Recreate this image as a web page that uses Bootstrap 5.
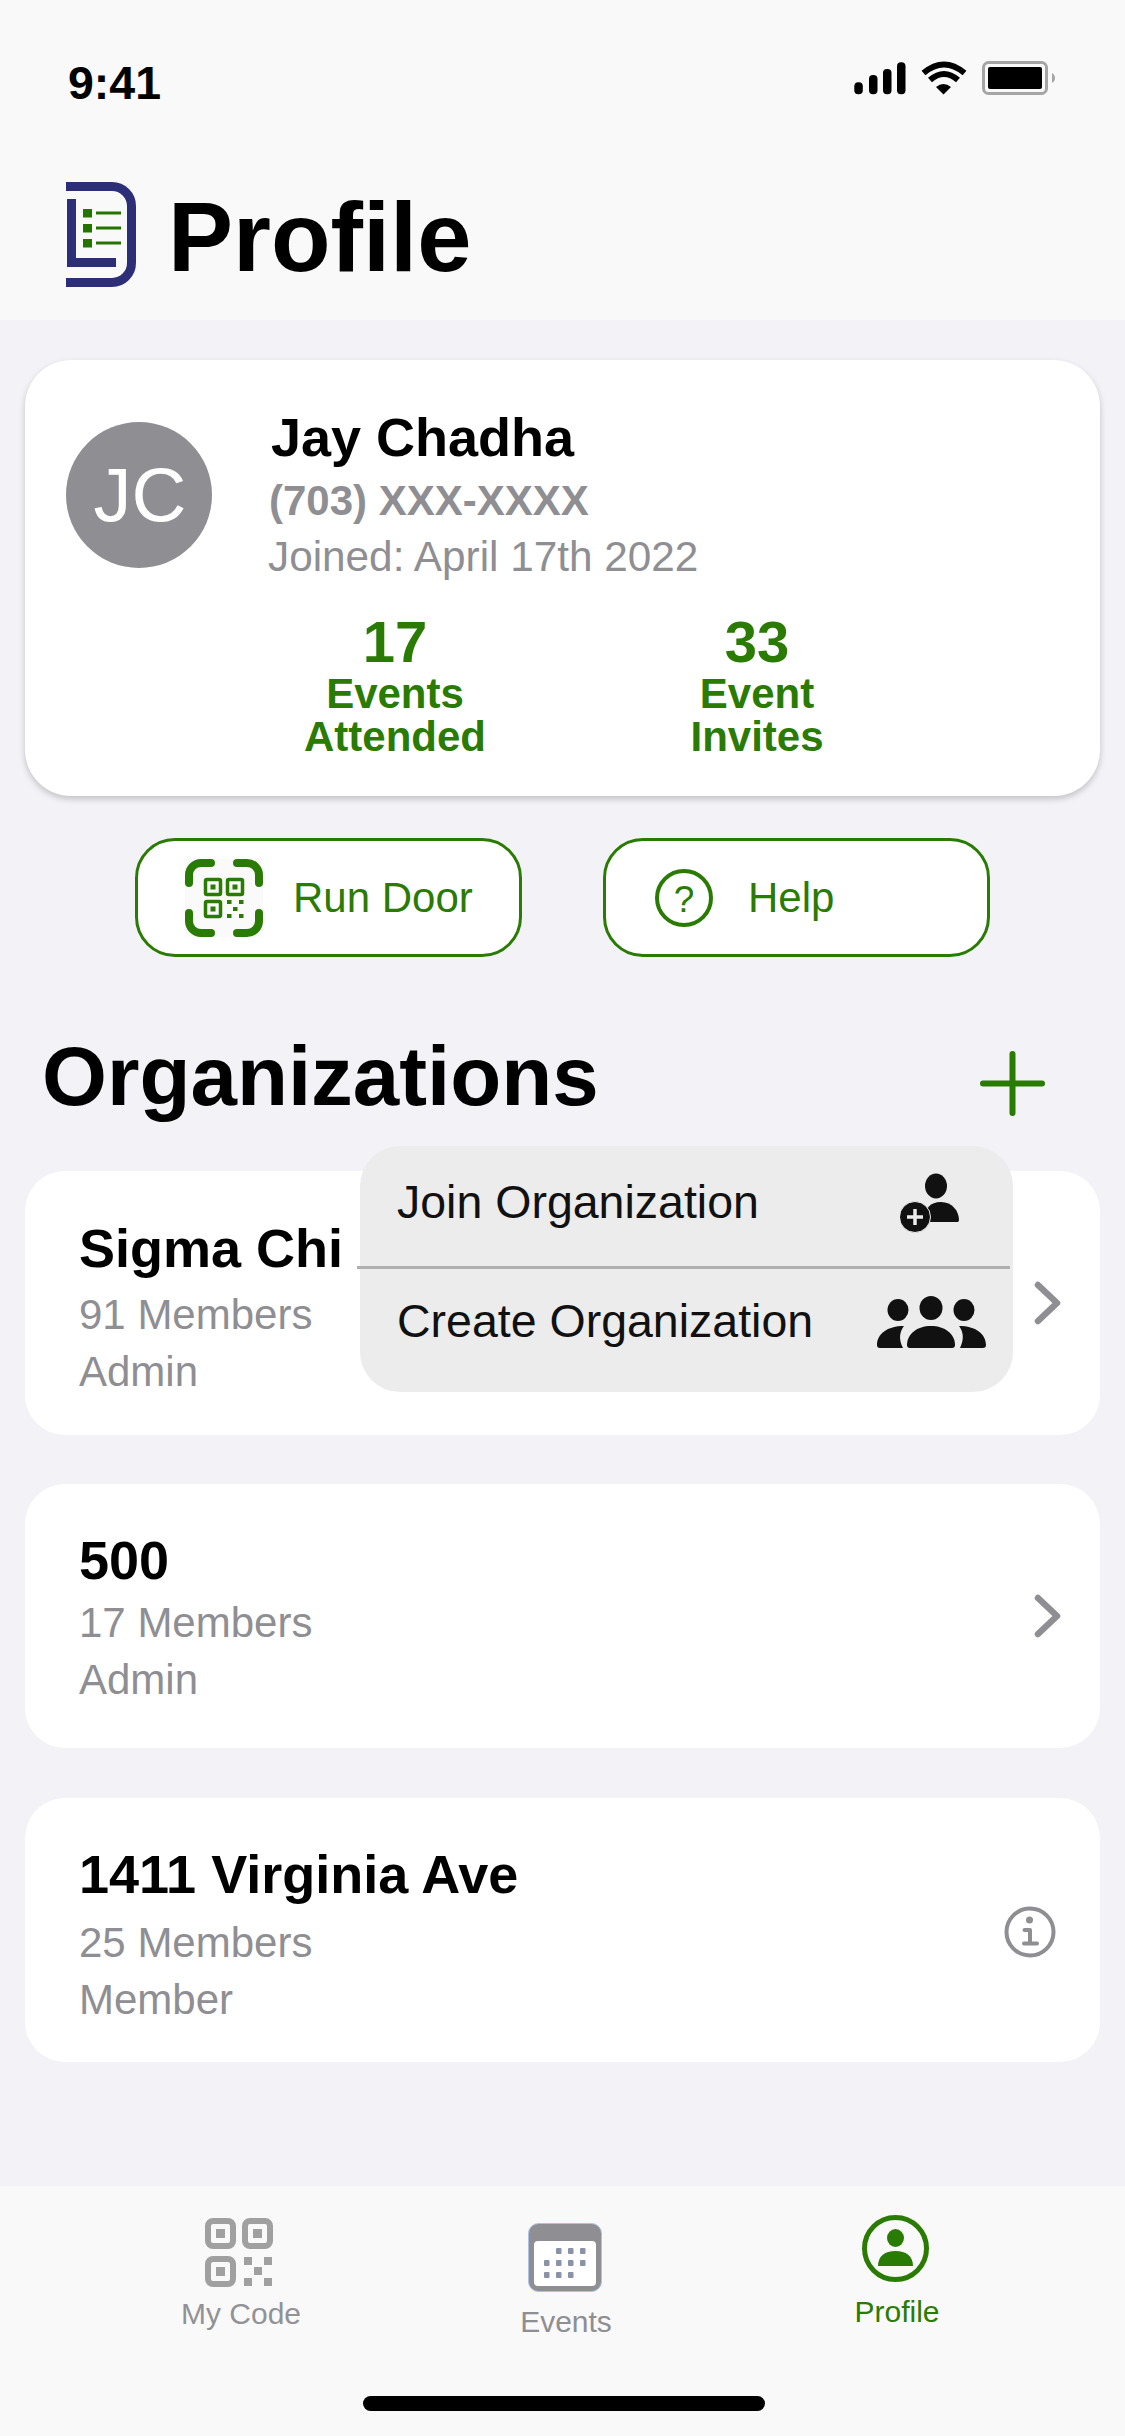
<!doctype html>
<html lang="en">
<head>
<meta charset="utf-8">
<title>Profile</title>
<link href="https://cdn.jsdelivr.net/npm/bootstrap@5.3.0/dist/css/bootstrap.min.css" rel="stylesheet">
<style>
html,body{width:1125px;height:2436px;margin:0;overflow:hidden}
body{font-family:"Liberation Sans",Arial,sans-serif;background:#f2f2f7;color:#000}
svg{display:block;flex:none}
.app-shell{width:1125px;height:2436px}
.top-area{height:320px;background:#f9f9f9;padding:61px 70px 0 66px}
.status-row{height:39px}
.clock{font-size:46.5px;line-height:45px;font-weight:700;margin:0 0 0 2px}
.status-icons{gap:15px}
.title-row{margin-top:82px;gap:32px}
.title-text{font-size:97.5px;line-height:105px;font-weight:700;margin:3px 0 0}
.content-area{padding:40px 25px 0}
.profile-box{height:436px;border-radius:46px;border:0;background:#fff;box-shadow:0 3px 6px rgba(0,0,0,.2);padding:62px 41px 0}
.avatar-disc{width:146px;height:146px;border-radius:50%;background:#8e8e93;color:#fff;font-size:76px;line-height:146px;text-align:center;padding-left:2px}
.person-text{margin-left:56px;margin-top:-15px}
.person-name{font-size:54px;line-height:60px;font-weight:700;margin-left:3px}
.person-phone{font-size:42px;line-height:50px;font-weight:700;color:#8e8e93;margin-top:9px;margin-left:1px}
.person-joined{font-size:42.300px;line-height:50px;color:#8e8e93;margin-top:6px}
.stat-row{margin-top:34px}
.stat-one{width:300px;margin-left:179px}
.stat-two{width:300px;margin-left:62px}
.stat-block{color:#2a7b03;font-weight:700;text-align:center}
.stat-num{font-size:58px;line-height:52px}
.stat-lbl{font-size:42px;line-height:43px;margin-top:4px}
.action-row{margin-top:42px;gap:81px}
.action-btn{width:387px;height:119px;border:3px solid #2a7b03;border-radius:40px;background:#fff;color:#2a7b03;font-size:42px;line-height:48px;padding:0;display:flex;align-items:center;justify-content:flex-start}
.action-btn:hover{background:#fff;color:#2a7b03;border-color:#2a7b03}
.scan-wrap{margin-left:47px;margin-right:30px;background:#fafafa}
.help-wrap{margin-left:48px;margin-right:34px}
.org-head{height:214px;padding:6px 55px 0 17px}
.org-title{font-size:83.500px;line-height:90px;font-weight:700;margin:18px 0 0;flex:1}
.plus-btn{padding:0;border:0;background:none;margin-top:32px}
.org-item{height:264px;border:0;border-radius:40px;background:#fff;padding:0 38px 0 54px;margin-bottom:50px}
.org-item.first-org{margin-bottom:49px}
.org-name{font-size:54px;line-height:60px;font-weight:700}
.org-sub{font-size:42px;line-height:50px;color:#8e8e93}
.gap-a{margin-top:47px}.gap-b{margin-top:12px}.gap-c{margin-top:7px}
.gap-d{margin-top:46px}.gap-e{margin-top:8px}
.gap-f{margin-top:46px}.gap-g{margin-top:14px}
.org-main{flex:1}
.chev-ico{margin-right:1px}
.info-ico{margin-right:6px;margin-top:4px}
.pop-menu{left:335px;top:189px;width:653px;height:246px;background:#ececec;border-radius:40px;z-index:5}
.pop-line{height:120px;padding:0 28px 6px 37px;font-size:46.500px;color:#111}
.pop-line.second{height:123px;padding-right:27px;padding-bottom:18px}
.pop-rule{height:3px;background:#b0b0b0;margin-left:-3px;margin-right:3px}
.pop-text{flex:1}
.join-ico{margin-right:25px}
.nav-bar{position:absolute;left:0;right:0;top:2186px;height:250px;background:#f9f9f9}
.tab-cell{width:300px;font-size:30px;line-height:36px;color:#8e8e93;text-align:center}
.tab-first{margin-left:91px;padding-top:32px;color:#929295}
.tab-first svg{margin:0 0 0 114px}
.tab-second{margin-left:25px;padding-top:37px}
.tab-second svg{margin:0 0 0 112px}
.tab-third{margin-left:31px;padding-top:29px;color:#2a7b03}
.tab-third svg{margin:0 0 0 115px}
.lbl-a{margin-top:9px}.lbl-b{margin-top:12px}.lbl-c{margin-top:12px}
.home-pill{position:absolute;left:363px;top:210px;width:402px;height:15px;border-radius:8px;background:#000}
</style>
</head>
<body>
<div class="app-shell position-relative d-flex flex-column">
  <header class="top-area">
    <div class="status-row d-flex justify-content-between align-items-start">
      <div class="clock">9:41</div>
      <div class="status-icons d-flex align-items-start">
        <svg width="52" height="34" viewBox="0 0 52 34" fill="#000"><rect x="0.300" y="21.300" width="8.500" height="12" rx="4"/><rect x="15" y="14" width="8.500" height="19.300" rx="4"/><rect x="29" y="8" width="8.500" height="25.300" rx="4"/><rect x="43" y="1.300" width="8.500" height="32" rx="4"/></svg>
        <svg width="46" height="34" viewBox="0 0 46 34" fill="none" stroke="#000" stroke-width="6"><path d="M2.500 12Q23 -5 43.500 12"/><path d="M9 19Q23 7 37 19"/><path d="M22.500 33.500L15 26Q22.500 20 30 26Z" fill="#000" stroke="none"/></svg>
        <svg width="73" height="35" viewBox="0 0 73 35"><rect x="1.500" y="1.500" width="63" height="31" rx="5" fill="none" stroke="#a5a5a5" stroke-width="3"/><rect x="6" y="6" width="54" height="22" rx="2" fill="#000"/><path d="M70 12c2 1 3 3 3 5s-1 4-3 5z" fill="#a5a5a5"/></svg>
      </div>
    </div>
    <div class="title-row d-flex align-items-start">
      <svg width="70" height="105" viewBox="0 0 70 105">
        <path d="M0 4.500H46A19.500 19.500 0 0 1 65.500 24V81A19.500 19.500 0 0 1 46 100.500H0" fill="none" stroke="#2c2f78" stroke-width="9"/>
        <path d="M1 17H10V76H50V85H1Z" fill="#2c2f78"/>
        <g fill="#267400"><rect x="17" y="27" width="9" height="8.500"/><rect x="17" y="42" width="9" height="8.500"/><rect x="17" y="57" width="9" height="8.500"/><rect x="30" y="29.500" width="25" height="3"/><rect x="30" y="44.500" width="25" height="3"/><rect x="30" y="59.500" width="25" height="3"/></g>
      </svg>
      <h1 class="title-text">Profile</h1>
    </div>
  </header>

  <main class="content-area flex-grow-1">
    <section class="card profile-box">
      <div class="d-flex align-items-start">
        <div class="avatar-disc">JC</div>
        <div class="person-text">
          <div class="person-name">Jay Chadha</div>
          <div class="person-phone">(703) XXX-XXXX</div>
          <div class="person-joined">Joined: April 17th 2022</div>
        </div>
      </div>
      <div class="stat-row d-flex">
        <div class="stat-block stat-one"><div class="stat-num">17</div><div class="stat-lbl">Events<br>Attended</div></div>
        <div class="stat-block stat-two"><div class="stat-num">33</div><div class="stat-lbl">Event<br>Invites</div></div>
      </div>
    </section>

    <div class="action-row d-flex justify-content-center">
      <button type="button" class="btn action-btn">
        <svg class="scan-wrap" width="78" height="78" viewBox="0 0 78 78" fill="none">
          <g stroke="#2a7b03" stroke-width="8" stroke-linecap="round"><path d="M4 24V16A12 12 0 0 1 16 4H26"/><path d="M52 4H62A12 12 0 0 1 74 16V24"/><path d="M4 54V62A12 12 0 0 0 16 74H26"/><path d="M52 74H62A12 12 0 0 0 74 62V54"/></g>
          <g stroke="#2a7b03" stroke-width="3.500"><rect x="20.500" y="20.500" width="15" height="15" rx="1.500"/><rect x="42.500" y="20.500" width="15" height="15" rx="1.500"/><rect x="20.500" y="42.500" width="15" height="15" rx="1.500"/></g>
          <g fill="#2a7b03"><rect x="25.500" y="25.500" width="5" height="5"/><rect x="47.500" y="25.500" width="5" height="5"/><rect x="25.500" y="47.500" width="5" height="5"/><rect x="42" y="41" width="4.500" height="4"/><rect x="54" y="41" width="4.500" height="4"/><rect x="48" y="48" width="4.500" height="4"/><rect x="42" y="55" width="4.500" height="4"/><rect x="54" y="55" width="4.500" height="4"/></g>
        </svg>
        <span>Run Door</span>
      </button>
      <button type="button" class="btn action-btn">
        <svg class="help-wrap" width="60" height="60" viewBox="0 0 60 60"><circle cx="30" cy="30" r="27" fill="none" stroke="#2a7b03" stroke-width="4"/><text x="30" y="44" text-anchor="middle" font-family="Liberation Sans, sans-serif" font-size="37" fill="#2a7b03">?</text></svg>
        <span>Help</span>
      </button>
    </div>

    <section class="org-block position-relative">
      <div class="org-head d-flex align-items-center">
        <h2 class="org-title">Organizations</h2>
        <button type="button" class="plus-btn" aria-label="Add">
          <svg width="65" height="65" viewBox="0 0 65 65" stroke="#2a7b03" stroke-width="6" stroke-linecap="round"><path d="M32.500 3V62M3 32.500H62"/></svg>
        </button>
      </div>

      <div class="pop-menu position-absolute">
        <div class="pop-line d-flex align-items-center">
          <span class="pop-text">Join Organization</span>
          <svg class="join-ico" width="60" height="60" viewBox="0 0 60 60" fill="#111"><ellipse cx="36" cy="13" rx="11" ry="12.500"/><path d="M25 47C25 35 30 29 41 29C52 29 59 38 59 47C59 48.500 58 49 57 49H28Z"/><circle cx="15" cy="44" r="15.500" stroke="#ececec" stroke-width="1"/><path d="M15 36V52M7 44H23" stroke="#ececec" stroke-width="3.500"/></svg>
        </div>
        <div class="pop-rule"></div>
        <div class="pop-line second d-flex align-items-center">
          <span class="pop-text">Create Organization</span>
          <svg width="109" height="52" viewBox="0 0 109 52" fill="#111"><ellipse cx="54" cy="12" rx="11.500" ry="12"/><ellipse cx="21" cy="14" rx="10.500" ry="11"/><ellipse cx="87" cy="14" rx="10.500" ry="11"/><path d="M30 49C30 38 40 30 54 30C68 30 78 38 78 49C78 51 77 52 75 52H33C31 52 30 51 30 49Z"/><path d="M0 49C0 38 10 30 27 30C25 33 20 40 26 52H3C1 52 0 51 0 49Z"/><path d="M109 49C109 38 99 30 82 30C84 33 89 40 83 52H106C108 52 109 51 109 49Z"/></svg>
        </div>
      </div>

      <article class="card org-item first-org flex-row align-items-start">
        <div class="org-main">
          <div class="org-name gap-a">Sigma Chi</div>
          <div class="org-sub gap-b">91 Members</div>
          <div class="org-sub gap-c">Admin</div>
        </div>
        <svg class="chev-ico align-self-center" width="27" height="44" viewBox="0 0 27 44" fill="none" stroke="#8e8e93" stroke-width="6.500" stroke-linecap="round" stroke-linejoin="round"><path d="M4 4L23 22L4 40"/></svg>
      </article>
      <article class="card org-item flex-row align-items-start">
        <div class="org-main">
          <div class="org-name gap-d">500</div>
          <div class="org-sub gap-e">17 Members</div>
          <div class="org-sub gap-c">Admin</div>
        </div>
        <svg class="chev-ico align-self-center" width="27" height="44" viewBox="0 0 27 44" fill="none" stroke="#8e8e93" stroke-width="6.500" stroke-linecap="round" stroke-linejoin="round"><path d="M4 4L23 22L4 40"/></svg>
      </article>
      <article class="card org-item flex-row align-items-start">
        <div class="org-main">
          <div class="org-name gap-f">1411 Virginia Ave</div>
          <div class="org-sub gap-g">25 Members</div>
          <div class="org-sub gap-c">Member</div>
        </div>
        <svg class="info-ico align-self-center" width="52" height="52" viewBox="0 0 52 52"><circle cx="26" cy="26" r="23.500" fill="none" stroke="#8e8e93" stroke-width="4"/><circle cx="25.500" cy="14" r="3.500" fill="#8e8e93"/><path d="M20.500 24H26V37M20 37.500H33" fill="none" stroke="#8e8e93" stroke-width="4" stroke-linecap="round" stroke-linejoin="round"/></svg>
      </article>
    </section>
  </main>

  <nav class="nav-bar d-flex align-items-start">
    <div class="tab-cell tab-first">
      <svg width="68" height="69" viewBox="0 0 68 69" fill="none" stroke="#a0a0a0" stroke-width="6"><rect x="3" y="3" width="25" height="25" rx="5"/><rect x="40" y="3" width="25" height="25" rx="5"/><rect x="3" y="41" width="25" height="25" rx="5"/><g fill="#a0a0a0" stroke="none"><rect x="11" y="11" width="9" height="9"/><rect x="48" y="11" width="9" height="9"/><rect x="11" y="49" width="9" height="9"/><rect x="39" y="39" width="8" height="8"/><rect x="59" y="39" width="8" height="8"/><rect x="49" y="49" width="8" height="8"/><rect x="39" y="60" width="8" height="8"/><rect x="59" y="60" width="8" height="8"/></g></svg>
      <div class="lbl-a">My Code</div>
    </div>
    <div class="tab-cell tab-second">
      <svg width="74" height="69" viewBox="0 0 74 69"><rect x="0.500" y="0.500" width="73" height="68" rx="10" fill="#8e8e93" stroke="#a9c3ea"/><rect x="6" y="18" width="62" height="45" rx="4" fill="#fff"/><g fill="#8a92a5"><rect x="28" y="25" width="5.500" height="6" rx="1"/><rect x="40" y="25" width="5.500" height="6" rx="1"/><rect x="52" y="25" width="5.500" height="6" rx="1"/><rect x="16" y="37" width="5.500" height="6" rx="1"/><rect x="28" y="37" width="5.500" height="6" rx="1"/><rect x="40" y="37" width="5.500" height="6" rx="1"/><rect x="52" y="37" width="5.500" height="6" rx="1"/><rect x="16" y="49" width="5.500" height="6" rx="1"/><rect x="28" y="49" width="5.500" height="6" rx="1"/><rect x="40" y="49" width="5.500" height="6" rx="1"/></g></svg>
      <div class="lbl-b">Events</div>
    </div>
    <div class="tab-cell tab-third">
      <svg width="67" height="67" viewBox="0 0 67 67" fill="#2a7b03"><circle cx="33.500" cy="33.500" r="31" fill="none" stroke="#2a7b03" stroke-width="5"/><ellipse cx="33.500" cy="23" rx="8.500" ry="9"/><path d="M16 51C16 41 23 36 33.500 36C44 36 51 41 51 51Z"/></svg>
      <div class="lbl-c">Profile</div>
    </div>
    <div class="home-pill"></div>
  </nav>
</div>
<script src="https://cdn.jsdelivr.net/npm/bootstrap@5.3.0/dist/js/bootstrap.bundle.min.js"></script>
</body>
</html>
